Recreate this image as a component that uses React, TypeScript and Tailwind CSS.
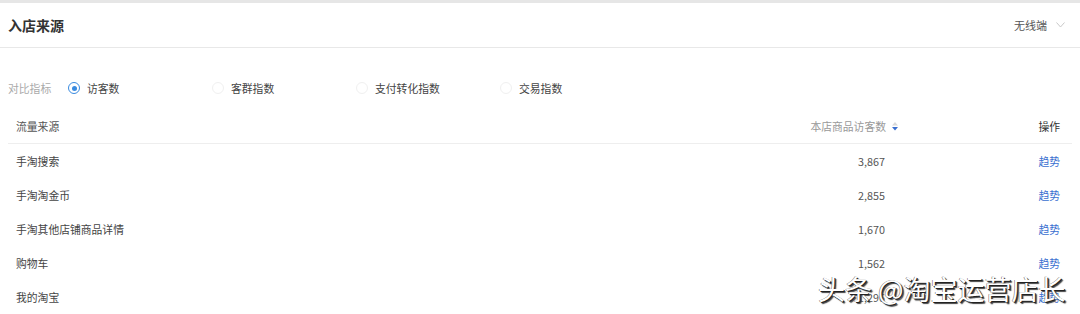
import React from 'react';

const rows = [
  { name: '手淘搜索', value: '3,867' },
  { name: '手淘淘金币', value: '2,855' },
  { name: '手淘其他店铺商品详情', value: '1,670' },
  { name: '购物车', value: '1,562' },
  { name: '我的淘宝', value: '1,296' },
];

const metrics = ['访客数', '客群指数', '支付转化指数', '交易指数'];

const Radio: React.FC<{ checked: boolean }> = ({ checked }) =>
  checked ? (
    <span className="flex h-[12px] w-[12px] items-center justify-center rounded-full border border-[#3a8be0]">
      <span className="h-[5px] w-[5px] rounded-full bg-[#3a8be0]" />
    </span>
  ) : (
    <span className="h-[12px] w-[12px] rounded-full border border-[#f0f0f0]" />
  );

export default function App() {
  return (
    <div
      className="relative h-[314px] w-[1080px] overflow-hidden bg-white text-[10.8px] text-[#444]"
      style={{ fontFamily: '"Noto Sans CJK SC", "Noto Sans", sans-serif' }}
    >
      <div className="h-[3px] bg-[#e6e6e6]" />

      {/* Header */}
      <div className="flex h-[45px] items-center justify-between border-b border-[#e8e8e8] pl-[8px] pr-[15px]">
        <span className="text-[14px] font-bold text-[#333]">入店来源</span>
        <span className="flex items-center gap-[9px] text-[11px] text-[#555]">
          无线端
          <svg width="9" height="6" viewBox="0 0 9 6" fill="none">
            <path d="M0.5 0.5 L4.5 5 L8.5 0.5" stroke="#c8c8c8" strokeWidth="1" />
          </svg>
        </span>
      </div>

      {/* Metric selector */}
      <div className="mt-[30px] flex h-[20px] items-center pl-[8px]">
        <span className="w-[60px] text-[#aaa]">对比指标</span>
        {metrics.map((m, i) => (
          <label key={m} className="flex w-[144px] items-center gap-[7px]">
            <Radio checked={i === 0} />
            <span className="text-[#444]">{m}</span>
          </label>
        ))}
      </div>

      {/* Table */}
      <div className="mx-[8px] mt-[12px]">
        <div className="flex h-[34px] items-center border-b border-[#eee]">
          <span className="flex-1 pl-[8px] text-[#555]">流量来源</span>
          <span className="flex w-[200px] items-center justify-end text-[#999]">
            本店商品访客数
            <svg className="-mr-[13px] ml-[6px]" width="6" height="9" viewBox="0 0 6 9">
              <path d="M3 0 L6 3.5 L0 3.5 Z" fill="#d8d8d8" />
              <path d="M0 5 L6 5 L3 8.5 Z" fill="#3a6fd0" />
            </svg>
          </span>
          <span className="w-[187px] pr-[12px] text-right text-[#333]">操作</span>
        </div>
        {rows.map((r) => (
          <div key={r.name} className="flex h-[34px] items-center pt-[1px]">
            <span className="flex-1 pl-[8px] text-[#444]">{r.name}</span>
            <span className="w-[200px] text-right text-[#555]">{r.value}</span>
            <span className="w-[187px] pr-[12px] text-right text-[#3a6fd0]">趋势</span>
          </div>
        ))}
      </div>

      {/* Watermark */}
      <div
        className="absolute left-[818px] top-[274px] whitespace-nowrap text-[27px] leading-[30px] text-white"
        style={{ textShadow: '1px 1px 0 #222, 2px 2px 1px #444, -0.5px -0.5px 0 #666' }}
      >
        头条 @淘宝运营店长
      </div>
    </div>
  );
}
